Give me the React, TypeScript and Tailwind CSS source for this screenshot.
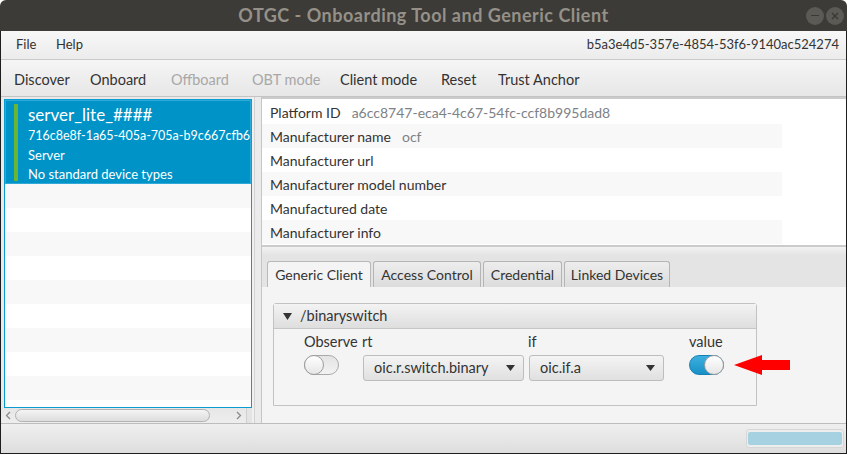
import { useState } from "react";

const infoRows = [
  { label: "Platform ID", value: "a6cc8747-eca4-4c67-54fc-ccf8b995dad8" },
  { label: "Manufacturer name", value: "ocf" },
  { label: "Manufacturer url" },
  { label: "Manufacturer model number" },
  { label: "Manufactured date" },
  { label: "Manufacturer info" },
];

const toolbarItems = [
  { name: "Discover", width: "w-[76px]", disabled: false },
  { name: "Onboard", width: "w-[81px]", disabled: false },
  { name: "Offboard", width: "w-[81px]", disabled: true },
  { name: "OBT mode", width: "w-[88px]", disabled: true },
  { name: "Client mode", width: "w-[101px]", disabled: false },
  { name: "Reset", width: "w-[57px]", disabled: false },
  { name: "Trust Anchor", width: "w-[100px]", disabled: false },
];

const tabs = [
  { name: "Generic Client", width: "w-[104px]" },
  { name: "Access Control", width: "w-[108px]" },
  { name: "Credential", width: "w-[79px]" },
  { name: "Linked Devices", width: "w-[106px]" },
];

function Toggle({ on }: { on: boolean }) {
  return (
    <div
      className={
        on
          ? "flex h-[20px] w-[35px] justify-end rounded-full border border-[#1680b4] bg-gradient-to-b from-[#3bb0df] to-[#1690c6]"
          : "flex h-[20px] w-[35px] justify-start rounded-full border border-[#a9a9a9] bg-gradient-to-b from-[#e4e4e4] to-[#f2f2f2]"
      }
    >
      <div className="-m-px h-[20px] w-[20px] rounded-full border border-[#9c9c9c] bg-gradient-to-b from-[#ffffff] to-[#e6e6e6]" />
    </div>
  );
}

function Combo({ text, width }: { text: string; width: string }) {
  return (
    <div
      className={`flex h-[26px] ${width} items-center justify-between rounded-[3px] border border-[#bdbdbd] bg-gradient-to-b from-[#f4f4f4] to-[#e0e0e0] pl-[10px] pr-[8px] text-[14.5px] text-[#333]`}
    >
      <span>{text}</span>
      <svg width="9" height="6" viewBox="0 0 9 6">
        <polygon points="0,0 9,0 4.5,6" fill="#333" />
      </svg>
    </div>
  );
}

function RedArrow() {
  return (
    <svg width="56" height="20" viewBox="0 0 56 20" className="ml-[10px]">
      <polygon points="0,10 28,0 28,5 56,5 56,15 28,15 28,20" fill="#ff0000" />
    </svg>
  );
}

export default function App() {
  const [activeTab] = useState(0);

  return (
    <div className="h-[455px] w-[848px] overflow-hidden bg-white font-[Lato,sans-serif]">
      <div className="flex h-[454px] w-[847px] flex-col">
        {/* title bar */}
        <div className="flex h-[31px] items-center rounded-t-[6px] bg-[#3c3b37]">
          <div className="w-[60px]" />
          <div className="flex-1 text-center text-[18px] font-bold tracking-[0.5px] text-[#959189]">
            OTGC - Onboarding Tool and Generic Client
          </div>
          <div className="flex w-[60px] items-center justify-end gap-[2px] pr-[3px]">
            <div className="flex h-[18px] w-[18px] items-center justify-center rounded-full bg-[#5b5a55]">
              <div className="h-[1.5px] w-[8px] bg-[#3a3935]" />
            </div>
            <div className="flex h-[18px] w-[18px] items-center justify-center rounded-full bg-[#5b5a55]">
              <svg width="8" height="8" viewBox="0 0 8 8">
                <path d="M1 1L7 7M7 1L1 7" stroke="#3a3935" strokeWidth="1.4" />
              </svg>
            </div>
          </div>
        </div>

        <div className="flex flex-1 flex-col border-x border-b border-[#1e1e1e]">
          {/* menu bar */}
          <div className="flex h-[29px] items-center border-b border-[#c9c9c9] bg-gradient-to-b from-[#f7f7f7] to-[#ececec] pl-[15px] pr-[7px] text-[13px] text-[#333]">
            <span className="w-[40px]">File</span>
            <span>Help</span>
            <span className="ml-auto">b5a3e4d5-357e-4854-53f6-9140ac524274</span>
          </div>

          {/* toolbar */}
          <div className="flex h-[37px] items-center border-b border-[#c4c4c4] bg-gradient-to-b from-[#f5f5f5] to-[#e7e7e7] pl-[13px] pt-[3px] text-[14.5px]">
            {toolbarItems.map((item) => (
              <span
                key={item.name}
                className={`${item.width} ${item.disabled ? "text-[#a8a8a8]" : "text-[#333]"}`}
              >
                {item.name}
              </span>
            ))}
          </div>

          {/* main */}
          <div className="flex h-[326px]">
            {/* device list */}
            <div className="flex w-[251px] flex-col bg-[#e9e9e9]">
              <div className="pl-[3px] pt-[2px]">
                <div className="flex h-[309px] w-[248px] flex-col overflow-hidden border border-[#0a9bd0] bg-white">
                  <div className="flex h-[84px] shrink-0 border border-[#31a9d8] bg-[#0093c7] text-white">
                    <div className="ml-[8px] mt-[3px] mb-[2px] w-[4px] bg-[#6bb535]" />
                    <div className="overflow-hidden whitespace-nowrap pl-[10px] pt-[3px]">
                      <div className="text-[17px] leading-[22px]">server_lite_####</div>
                      <div className="text-[12.5px] leading-[20px]">716c8e8f-1a65-405a-705a-b9c667cfb6</div>
                      <div className="text-[13px] leading-[19px]">Server</div>
                      <div className="text-[13px] leading-[19px]">No standard device types</div>
                    </div>
                  </div>
                  {Array.from({ length: 10 }).map((_, i) => (
                    <div
                      key={i}
                      className={i % 2 === 0 ? "h-[24px] shrink-0 bg-[#f8f8f8]" : "h-[24px] shrink-0 bg-white"}
                    />
                  ))}
                </div>
              </div>
              {/* horizontal scrollbar */}
              <div className="flex h-[15px] items-center">
                <div className="flex h-[15px] flex-1 items-center bg-gradient-to-b from-[#e6e6e6] to-[#eeeeee] pl-[4px] pr-[4px]">
                  <svg width="6" height="9" viewBox="0 0 6 9">
                    <path d="M5 1L1.5 4.5L5 8" stroke="#8a8a8a" strokeWidth="1.3" fill="none" />
                  </svg>
                  <div className="ml-[4px] h-[13px] w-[195px] rounded-full border border-[#b2b2b2] bg-gradient-to-b from-[#f4f4f4] to-[#dddddd]" />
                  <div className="flex-1" />
                  <svg width="6" height="9" viewBox="0 0 6 9">
                    <path d="M1 1L4.5 4.5L1 8" stroke="#8a8a8a" strokeWidth="1.3" fill="none" />
                  </svg>
                </div>
                <div className="h-[15px] w-[6px] border-l border-[#d0d0d0] bg-[#e4e4e4]" />
              </div>
            </div>

            {/* vertical splitter */}
            <div className="flex w-[10px]">
              <div className="w-[2px] bg-[#f0f0f0]" />
              <div className="w-[1px] bg-[#d3d3d3]" />
              <div className="w-[6px] bg-[#ebebeb]" />
              <div className="w-[1px] bg-[#c6c6c6]" />
            </div>

            {/* details */}
            <div className="flex flex-1 flex-col">
              <div className="h-[150px] border-y-2 border-[#cbcbcb] bg-white pt-[1px]">
                {infoRows.map((row, i) => (
                  <div
                    key={row.label}
                    className={`flex h-[24px] w-[520px] items-center pl-[8px] text-[14px] ${
                      i % 2 === 1 ? "bg-[#f8f8f8]" : "bg-white"
                    }`}
                  >
                    <span className="text-[#333]">{row.label}</span>
                    {row.value && <span className="ml-[11px] text-[#7d8288]">{row.value}</span>}
                  </div>
                ))}
              </div>

              {/* horizontal splitter */}
              <div className="h-[9px] bg-gradient-to-b from-[#f2f2f2] to-[#e3e3e3]" />

              {/* tab pane */}
              <div className="flex flex-1 flex-col">
                <div className="flex h-[31px] items-end gap-[2px] bg-[#e4e4e4] pl-[5px]">
                  {tabs.map((tab, i) => (
                    <div
                      key={tab.name}
                      className={`flex h-[26px] ${tab.width} items-center justify-center rounded-t-[3px] border border-b-0 text-[14px] text-[#333] ${
                        i === activeTab
                          ? "border-[#b9b9b9] bg-[#f4f4f4]"
                          : "border-[#b5b5b5] bg-gradient-to-b from-[#ededed] to-[#dcdcdc]"
                      }`}
                    >
                      {tab.name}
                    </div>
                  ))}
                </div>
                <div className="flex-1 bg-[#f4f4f4] pl-[11px] pt-[16px]">
                  {/* titled pane */}
                  <div className="h-[103px] w-[484px] rounded-t-[3px] border border-[#c2c2c2]">
                    <div className="flex h-[25px] items-center border-b border-[#c6c6c6] bg-gradient-to-b from-[#f3f3f3] to-[#dedede] pl-[9px] text-[14.5px] text-[#333]">
                      <svg width="9" height="7" viewBox="0 0 9 7">
                        <polygon points="0,0 9,0 4.5,7" fill="#333" />
                      </svg>
                      <span className="ml-[8px]">/binaryswitch</span>
                    </div>
                    <div className="grid grid-cols-[58px_166px_161px_auto] pl-[30px] pt-[4px] text-[14.5px] text-[#333]">
                      <div className="leading-[18px]">Observe</div>
                      <div className="leading-[18px]">rt</div>
                      <div className="leading-[18px]">if</div>
                      <div className="leading-[18px]">value</div>
                      <div className="mt-[4px]">
                        <Toggle on={false} />
                      </div>
                      <div className="mt-[4px] pl-[1px]">
                        <Combo text="oic.r.switch.binary" width="w-[161px]" />
                      </div>
                      <div className="mt-[4px] pl-[1px]">
                        <Combo text="oic.if.a" width="w-[135px]" />
                      </div>
                      <div className="mt-[4px] flex items-start">
                        <Toggle on={true} />
                        <RedArrow />
                      </div>
                    </div>
                  </div>
                </div>
              </div>
            </div>
          </div>

          {/* status bar */}
          <div className="flex flex-1 items-center justify-end border-t border-[#bdbdbd] bg-gradient-to-b from-[#efefef] to-[#dedede] pr-[2px]">
            <div className="flex h-[19px] w-[98px] items-center justify-center rounded-[3px] border border-[#d6d6d6] bg-[#ededed]">
              <div className="h-[13px] w-[94px] rounded-[2px] bg-[#a6d1e0]" />
            </div>
          </div>
        </div>
      </div>
    </div>
  );
}
